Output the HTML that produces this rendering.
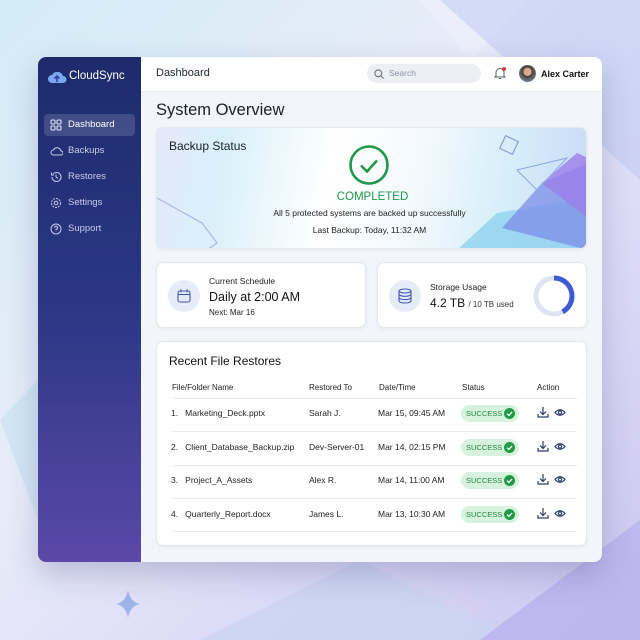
<!DOCTYPE html>
<html><head><meta charset="utf-8"><style>
*{box-sizing:border-box;margin:0;padding:0}
body{width:640px;height:640px;overflow:hidden;font-family:"Liberation Sans",sans-serif;position:relative;background:linear-gradient(135deg,#d3ecf6 0%,#e8ecf9 40%,#dcd9f6 70%,#cbc5f0 100%);color:#1d2433}
.abs{position:absolute;white-space:nowrap}
.win{left:38px;top:57px;width:564px;height:505px;border-radius:8px;overflow:hidden;background:#f2f5f9;box-shadow:0 12px 30px rgba(60,60,120,.25)}
.side{left:0;top:0;width:103px;height:505px;background:linear-gradient(180deg,#1d2b6d 0%,#2b3785 50%,#5b48a8 100%)}
.nav{left:6px;width:91px;height:22px;border-radius:4px;color:#c8cdea;font-size:9.5px;line-height:22px;padding-left:24px}
.nav svg{position:absolute;left:6px;top:5px}
.top{left:103px;top:0;width:461px;height:35px;background:#fff;border-bottom:1px solid #e8ebf0}
.card{background:#fff;border-radius:7px;border:1px solid #e4e8ef;box-shadow:0 1px 3px rgba(0,0,0,.05)}
.t{font-size:8.5px;color:#222}
.pill{background:#d7f3de;color:#1f8a3e;font-size:7.5px;border-radius:9px;width:58px;height:17px;line-height:17px;padding-left:5px}
.pill svg{position:absolute;right:4px;top:3px}
.hl{left:15px;width:405px;height:1px;background:#e6e9ee}
</style></head><body>
<svg class="abs" style="left:0;top:0" width="640" height="640">
<polygon points="420,0 530,0 470,60" fill="#eef0fb" opacity=".8"/>
<polygon points="440,0 640,0 640,180" fill="#bcc7f3" opacity=".5"/>
<polygon points="0,420 38,380 38,520" fill="#c4e3f1" opacity=".6"/>
<polygon points="200,640 360,560 520,640" fill="#c9d4f2" opacity=".8"/>
<polygon points="480,640 640,520 640,640" fill="#b9b3ec" opacity=".8"/>
<path d="M128 590 Q130 602 140 604 Q130 606 128 618 Q126 606 116 604 Q126 602 128 590Z" fill="#9fb4ea"/>
</svg>
<div class="abs win">
 <div class="abs side">
  <svg class="abs" style="left:9px;top:12px" width="20" height="16"><path d="M5 14a4 4 0 0 1 0-8 6 6 0 0 1 11 1 3.5 3.5 0 0 1 0 7z" fill="#7aa8f0"/><path d="M10 13V7M7.5 9.5 10 7l2.5 2.5" stroke="#3b3f9a" stroke-width="1.6" fill="none"/></svg>
  <div class="abs" style="left:31px;top:13px;color:#fff;font-size:11.5px">CloudSync</div>
  <div class="abs nav" style="top:57px;background:rgba(255,255,255,.15);color:#fff"><svg width="12" height="12" fill="none" stroke="#dfe3f7" stroke-width="1.1"><rect x="1" y="1" width="4" height="4" rx="1"/><rect x="7" y="1" width="4" height="4" rx="1"/><rect x="1" y="7" width="4" height="4" rx="1"/><rect x="7" y="7" width="4" height="4" rx="1"/></svg>Dashboard</div>
  <div class="abs nav" style="top:83px"><svg width="13" height="12" fill="none" stroke="#c8cdea" stroke-width="1"><path d="M3.5 10a2.5 2.5 0 0 1 0-5 4 4 0 0 1 7.5 1 2 2 0 0 1 0 4z"/></svg>Backups</div>
  <div class="abs nav" style="top:109px"><svg width="12" height="12" fill="none" stroke="#c8cdea" stroke-width="1"><path d="M2 6a4.5 4.5 0 1 0 1.3-3.2M1.5 1.5v2.5h2.5M6 3.5V6l2 1.3"/></svg>Restores</div>
  <div class="abs nav" style="top:135px"><svg width="12" height="12" fill="none" stroke="#c8cdea" stroke-width="1"><circle cx="6" cy="6" r="4.5" stroke-dasharray="2 1"/><circle cx="6" cy="6" r="1.8"/></svg>Settings</div>
  <div class="abs nav" style="top:161px"><svg width="12" height="12" fill="none" stroke="#c8cdea" stroke-width="1"><circle cx="6" cy="6" r="5"/><path d="M4.5 4.7a1.5 1.5 0 1 1 1.5 1.6V7.3M6 8.7v.3"/></svg>Support</div>
 </div>
 <div class="abs top">
  <div class="abs" style="left:15px;top:10px;font-size:11px;color:#1d2433">Dashboard</div>
  <div class="abs" style="left:226px;top:7px;width:114px;height:19px;border-radius:10px;background:#eceff4;font-size:8.5px;color:#8a93a3;line-height:19px;padding-left:22px"><svg class="abs" style="left:7px;top:5px" width="10" height="10" fill="none" stroke="#6b7383" stroke-width="1.1"><circle cx="4.3" cy="4.3" r="3.4"/><path d="M7 7l2.5 2.5"/></svg>Search</div>
  <svg class="abs" style="left:352px;top:9px" width="14" height="14" fill="none" stroke="#555d6e" stroke-width="1"><path d="M3 10V6.5a4 4 0 0 1 8 0V10l1 1H2zM6 12.5h2"/><circle cx="11" cy="3" r="2" fill="#e53935" stroke="none"/></svg>
  <div class="abs" style="left:378px;top:8px;width:17px;height:17px;border-radius:50%;background:radial-gradient(circle at 50% 40%,#d9a98a 30%,#4a3a30 32%,#6b7a88 70%)"></div>
  <div class="abs" style="left:400px;top:12px;font-size:9px;color:#111;font-weight:bold">Alex Carter</div>
 </div>
 <div class="abs" style="left:118px;top:44px;font-size:16.5px;color:#1a1f2c">System Overview</div>
 <div class="abs card" style="left:118px;top:70px;width:431px;height:122px;overflow:hidden;background:linear-gradient(100deg,#e6e8fa 0%,#d8f0fa 15%,#ffffff 40%,#f4f9fd 60%,#d6eefa 80%,#c9d8f6 100%)">
  <svg class="abs" style="left:0;top:0" width="431" height="122">
   <path d="M0 70 L45 95 L60 115 L50 122" fill="none" stroke="#a9b4ee" stroke-width="1.2"/>
   <rect x="345" y="10" width="14" height="14" transform="rotate(25 352 17)" fill="none" stroke="#8c9ae6" stroke-width="1.2"/>
   <polygon points="300,122 340,85 431,70 431,122" fill="#8fd2ef" opacity=".8"/>
   <polygon points="345,100 385,55 431,35 431,122" fill="#7d8ee8" opacity=".75"/>
   <polygon points="385,55 420,25 431,30 431,90" fill="#9b7ee8" opacity=".8"/>
   <path d="M360 42 L410 30 L380 62 Z" fill="none" stroke="#8aa6ea" stroke-width="1"/>
  </svg>
  <div class="abs" style="left:12px;top:11px;font-size:12px;color:#1a1f2c">Backup Status</div>
  <svg class="abs" style="left:191px;top:16px" width="42" height="42" fill="none" stroke="#1e9a48" stroke-width="2.6"><circle cx="21" cy="21" r="18.5"/><path d="M13 21.5l6 6 10-11"/></svg>
  <div class="abs" style="left:0;width:431px;text-align:center;top:63px;font-size:11.5px;color:#1e9a48">COMPLETED</div>
  <div class="abs" style="left:0;width:425px;text-align:center;top:80px;font-size:8.5px;color:#222">All 5 protected systems are backed up successfully</div>
  <div class="abs" style="left:0;width:425px;text-align:center;top:97px;font-size:8.5px;color:#222">Last Backup: Today, 11:32 AM</div>
 </div>
 <div class="abs card" style="left:118px;top:205px;width:210px;height:66px">
  <div class="abs" style="left:11px;top:17px;width:32px;height:32px;border-radius:50%;background:#e6ebf8"></div>
  <svg class="abs" style="left:20px;top:26px" width="14" height="14" fill="none" stroke="#3f56b8" stroke-width="1.1"><rect x="1" y="2" width="12" height="11" rx="2"/><path d="M1 5.5h12M4 0.5v3M10 0.5v3"/></svg>
  <div class="abs t" style="left:52px;top:13px">Current Schedule</div>
  <div class="abs" style="left:52px;top:27px;font-size:12.5px;color:#111">Daily at 2:00 AM</div>
  <div class="abs" style="left:52px;top:45px;font-size:8px;color:#222">Next: Mar 16</div>
 </div>
 <div class="abs card" style="left:339px;top:205px;width:210px;height:66px">
  <div class="abs" style="left:11px;top:17px;width:32px;height:32px;border-radius:50%;background:#e6ebf8"></div>
  <svg class="abs" style="left:20px;top:25px" width="14" height="16" fill="none" stroke="#3f56b8" stroke-width="1.1"><ellipse cx="7" cy="3" rx="6" ry="2"/><path d="M1 3v10c0 1 2.7 2 6 2s6-1 6-2V3M1 6.3c0 1 2.7 2 6 2s6-1 6-2M1 9.6c0 1 2.7 2 6 2s6-1 6-2"/></svg>
  <div class="abs t" style="left:52px;top:19px">Storage Usage</div>
  <div class="abs" style="left:52px;top:33px;font-size:12px;color:#111">4.2 TB <span style="font-size:8px;color:#333">/ 10 TB used</span></div>
  <svg class="abs" style="left:154px;top:11px" width="44" height="44" fill="none" stroke-width="5"><circle cx="22" cy="22" r="18" stroke="#dfe4f5"/><circle cx="22" cy="22" r="18" stroke="#3f5bd3" stroke-dasharray="47.5 200" transform="rotate(-90 22 22)"/></svg>
 </div>
 <div class="abs card" style="left:118px;top:284px;width:431px;height:205px">
  <div class="abs" style="left:12px;top:12px;font-size:12px;color:#111">Recent File Restores</div>
  <div class="abs t" style="left:15px;top:41px;font-size:8px">File/Folder Name</div>
  <div class="abs t" style="left:152px;top:41px;font-size:8px">Restored To</div>
  <div class="abs t" style="left:222px;top:41px;font-size:8px">Date/Time</div>
  <div class="abs t" style="left:305px;top:41px;font-size:8px">Status</div>
  <div class="abs t" style="left:380px;top:41px;font-size:8px">Action</div>
  <div class="abs hl" style="top:56px"></div>
  <div class="abs hl" style="top:89px"></div>
  <div class="abs hl" style="top:123px"></div>
  <div class="abs hl" style="top:156px"></div>
  <div class="abs hl" style="top:189px"></div>
 </div>
</div>
<div class="abs t" style="left:171px;top:408px">1.&nbsp;&nbsp;&nbsp;Marketing_Deck.pptx</div>
<div class="abs t" style="left:309px;top:408px">Sarah J.</div>
<div class="abs t" style="left:378px;top:408px">Mar 15, 09:45 AM</div>
<div class="abs t" style="left:171px;top:442px">2.&nbsp;&nbsp;&nbsp;Client_Database_Backup.zip</div>
<div class="abs t" style="left:309px;top:442px">Dev-Server-01</div>
<div class="abs t" style="left:378px;top:442px">Mar 14, 02:15 PM</div>
<div class="abs t" style="left:171px;top:475px">3.&nbsp;&nbsp;&nbsp;Project_A_Assets</div>
<div class="abs t" style="left:309px;top:475px">Alex R.</div>
<div class="abs t" style="left:378px;top:475px">Mar 14, 11:00 AM</div>
<div class="abs t" style="left:171px;top:509px">4.&nbsp;&nbsp;&nbsp;Quarterly_Report.docx</div>
<div class="abs t" style="left:309px;top:509px">James L.</div>
<div class="abs t" style="left:378px;top:509px">Mar 13, 10:30 AM</div>
<svg class="abs" style="left:0;top:0" width="640" height="640">
<defs><g id="act" fill="none" stroke="#2c3a6a" stroke-width="1.2"><path d="M6 0v7M3 4.5l3 3 3-3M1 7v3h10V7"/><path d="M18 5.5q5-5.5 10 0q-5 5.5-10 0z"/><circle cx="23" cy="5.5" r="1.6"/></g>
<g id="chk"><circle cx="5.5" cy="5.5" r="5.5" fill="#1f9a45"/><path d="M3 5.7l1.8 1.8 3.3-3.5" stroke="#fff" stroke-width="1.3" fill="none"/></g></defs>
<use href="#act" x="537" y="407"/><use href="#act" x="537" y="441"/><use href="#act" x="537" y="474"/><use href="#act" x="537" y="508"/>
</svg>
<div class="abs pill" style="left:461px;top:405px">SUCCESS<svg width="11" height="11"><use href="#chk"/></svg></div>
<div class="abs pill" style="left:461px;top:439px">SUCCESS<svg width="11" height="11"><use href="#chk"/></svg></div>
<div class="abs pill" style="left:461px;top:472px">SUCCESS<svg width="11" height="11"><use href="#chk"/></svg></div>
<div class="abs pill" style="left:461px;top:506px">SUCCESS<svg width="11" height="11"><use href="#chk"/></svg></div>
</body></html>
